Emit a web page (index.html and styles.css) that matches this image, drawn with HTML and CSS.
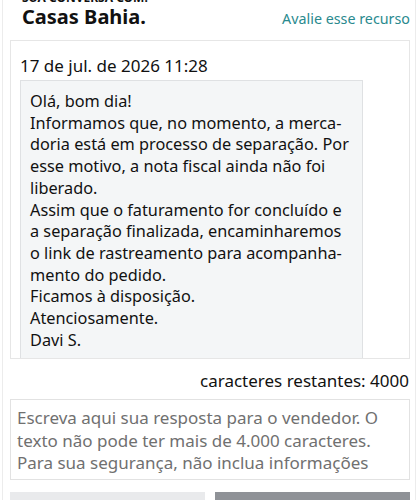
FILE: index.html
```html
<!DOCTYPE html>
<html lang="pt-BR">
<head>
    <meta charset="UTF-8">
    <meta name="viewport" content="width=device-width, initial-scale=1.0">
    <title>Mensagens do vendedor</title>
    <link rel="stylesheet" href="styles.css">
</head>
<body>

<div class="page">
    <div class="header">
        <div class="header-left">
            <div class="header-label">Sua conversa com:</div>
            <div class="seller-name">Casas Bahia.</div>
        </div>
        <a class="feedback-link" href="#">Avalie esse recurso</a>
    </div>

    <div class="thread">
        <div class="msg-date">17 de jul. de 2026 11:28</div>
        <div class="msg-bubble">
            Olá, bom dia!<br>
            Informamos que, no momento, a merca-<br>doria está em processo de separação. Por<br>esse motivo, a nota fiscal ainda não foi<br>liberado.<br>
            Assim que o faturamento for concluído e<br>a separação finalizada, encaminharemos<br>o link de rastreamento para acompanha-<br>mento do pedido.<br>
            Ficamos à disposição.<br>
            Atenciosamente.<br>
            Davi S.<br>
            <br>
        </div>
    </div>

    <div class="char-count">caracteres restantes: 4000</div>

    <textarea class="reply-box" placeholder="Escreva aqui sua resposta para o vendedor. O texto não pode ter mais de 4.000 caracteres. Para sua segurança, não inclua informações pessoais, como detalhes de cartão de crédito ou senhas."></textarea>

    <div class="actions">
        <button class="btn btn-secondary" type="button" aria-label="Anexar"></button>
        <button class="btn btn-primary" type="button" aria-label="Enviar"></button>
    </div>
</div>

</body>
</html>
```

FILE: styles.css
```css
body {
    margin: 0;
    background-color: white;
    font-family: "Noto Sans", "Open Sans", sans-serif;
    color: #111;
}

.page {
    margin: 0 2px;
    padding: 0 5px 0 7px;
    border-left: 1px solid #ececec;
    border-right: 1px solid #ececec;
    min-height: 500px;
    box-sizing: border-box;
}

.header {
    display: flex;
    justify-content: space-between;
    align-items: flex-end;
    padding: 0 0 13px 12px;
    margin-top: -7px;
}

.header-label {
    font-size: 12px;
    font-weight: bold;
    text-transform: uppercase;
    line-height: 10px;
}

.seller-name {
    margin-top: 4px;
    font-size: 20px;
    font-weight: bold;
    line-height: 20px;
}

.feedback-link {
    color: #2a8a8e;
    text-decoration: none;
    font-size: 14.3px;
    line-height: 22px;
    margin-bottom: -3px;
}

.thread {
    border: 1px solid #e6e6e6;
    height: 319px;
    overflow: hidden;
    padding: 14px 0 0 9px;
    box-sizing: border-box;
}

.msg-date {
    font-size: 17px;
    line-height: 22px;
    margin-bottom: 3px;
}

.msg-bubble {
    width: 343px;
    box-sizing: border-box;
    background-color: #f4f6f7;
    border: 1px solid #dfe1e3;
    padding: 10px 9px;
    font-size: 16.3px;
    line-height: 21.7px;
}

.char-count {
    text-align: right;
    font-size: 17px;
    line-height: 22px;
    padding: 11px 1px 7px 0;
}

.reply-box {
    display: block;
    width: 100%;
    height: 81px;
    box-sizing: border-box;
    border: 1px solid #e2e2e2;
    padding: 7px 6px;
    font-family: inherit;
    font-size: 17px;
    line-height: 22.5px;
    resize: none;
    overflow: hidden;
}

.reply-box::placeholder {
    color: #707070;
}

.actions {
    display: flex;
    gap: 10px;
    margin-top: 12px;
}

.btn {
    flex: 1;
    height: 40px;
    border: none;
}

.btn-secondary {
    background-color: #e9eaec;
}

.btn-primary {
    background-color: #8f9297;
}
```
